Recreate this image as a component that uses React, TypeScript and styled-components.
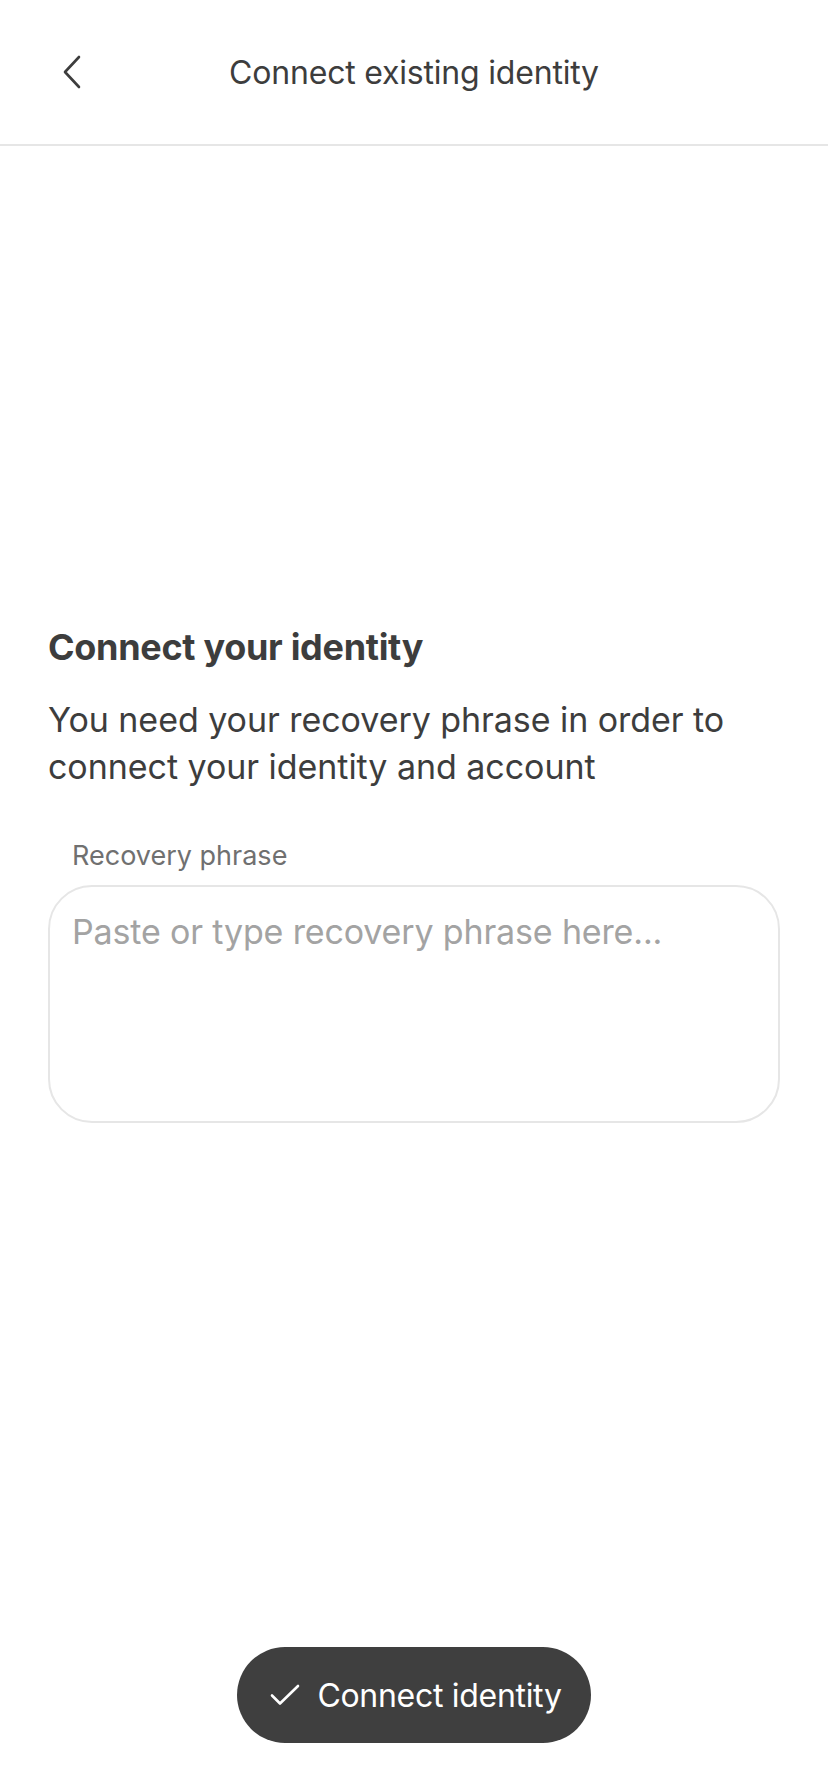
import React from "react";
import styled, { createGlobalStyle } from "styled-components";

const GlobalStyle = createGlobalStyle`
  html, body {
    margin: 0;
    padding: 0;
    background: #ffffff;
  }
  body {
    font-family: Inter, "Noto Sans", "Liberation Sans", sans-serif;
    color: #3d3d3d;
    -webkit-font-smoothing: antialiased;
  }
  * { box-sizing: border-box; }
`;

const Page = styled.div`
  width: 828px;
  min-height: 1792px;
  display: flex;
  flex-direction: column;
  background: #ffffff;
`;

const Header = styled.header`
  position: relative;
  height: 146px;
  display: flex;
  align-items: center;
  justify-content: center;
  border-bottom: 2px solid #e6e6e6;
`;

const BackButton = styled.button`
  position: absolute;
  left: 52px;
  top: 50%;
  transform: translateY(-50%);
  width: 40px;
  height: 48px;
  padding: 0;
  border: none;
  background: transparent;
  display: flex;
  align-items: center;
  justify-content: center;
  color: #3d3d3d;
  cursor: pointer;
`;

const Title = styled.h1`
  margin: 0;
  font-size: 32px;
  font-weight: 400;
  letter-spacing: -0.2px;
  color: #3d3d3d;
`;

const Main = styled.main`
  flex: 1;
  display: flex;
  flex-direction: column;
  padding: 478px 48px 0;
`;

const Heading = styled.h2`
  margin: 0;
  font-size: 36px;
  font-weight: 700;
  letter-spacing: -0.3px;
  line-height: 46px;
  color: #3d3d3d;
`;

const Description = styled.p`
  margin: 26px 0 0;
  font-size: 34px;
  font-weight: 400;
  letter-spacing: -0.05px;
  line-height: 47px;
  color: #3d3d3d;
`;

const Field = styled.label`
  margin-top: 50px;
  display: flex;
  flex-direction: column;
  gap: 13px;
`;

const FieldLabel = styled.span`
  padding-left: 24px;
  font-size: 27px;
  line-height: 32px;
  letter-spacing: 0;
  color: #707070;
`;

const PhraseInput = styled.textarea`
  width: 100%;
  height: 238px;
  resize: none;
  border: 2px solid #e6e6e6;
  border-radius: 44px;
  padding: 22px 22px;
  font-family: inherit;
  font-size: 34px;
  line-height: 46px;
  letter-spacing: -0.15px;
  color: #3d3d3d;
  outline: none;
  &::placeholder {
    color: #a3a3a3;
  }
`;

const Footer = styled.footer`
  display: flex;
  justify-content: center;
  padding: 0 0 49px;
`;

const PrimaryButton = styled.button`
  height: 96px;
  padding: 0 29px 0 33px;
  border: none;
  border-radius: 48px;
  background: #3f3f3f;
  color: #ffffff;
  display: flex;
  align-items: center;
  gap: 17px;
  font-family: inherit;
  font-size: 32px;
  font-weight: 400;
  letter-spacing: -0.3px;
  cursor: pointer;
`;

const ChevronLeft = () => (
  <svg width="22" height="34" viewBox="0 0 22 34" fill="none">
    <path
      d="M18 2 L4 17 L18 32"
      stroke="currentColor"
      strokeWidth="2.6"
      strokeLinecap="round"
      strokeLinejoin="round"
    />
  </svg>
);

const CheckIcon = () => (
  <svg width="30" height="24" viewBox="0 0 30 24" fill="none">
    <path
      d="M2 12.5 L10 20.5 L28 3"
      stroke="currentColor"
      strokeWidth="2.6"
      strokeLinecap="round"
      strokeLinejoin="round"
    />
  </svg>
);

export default function App() {
  return (
    <>
      <GlobalStyle />
      <Page>
        <Header>
          <BackButton aria-label="Back">
            <ChevronLeft />
          </BackButton>
          <Title>Connect existing identity</Title>
        </Header>
        <Main>
          <Heading>Connect your identity</Heading>
          <Description>
            You need your recovery phrase in order to connect your identity and
            account
          </Description>
          <Field>
            <FieldLabel>Recovery phrase</FieldLabel>
            <PhraseInput placeholder="Paste or type recovery phrase here..." />
          </Field>
        </Main>
        <Footer>
          <PrimaryButton>
            <CheckIcon />
            Connect identity
          </PrimaryButton>
        </Footer>
      </Page>
    </>
  );
}
